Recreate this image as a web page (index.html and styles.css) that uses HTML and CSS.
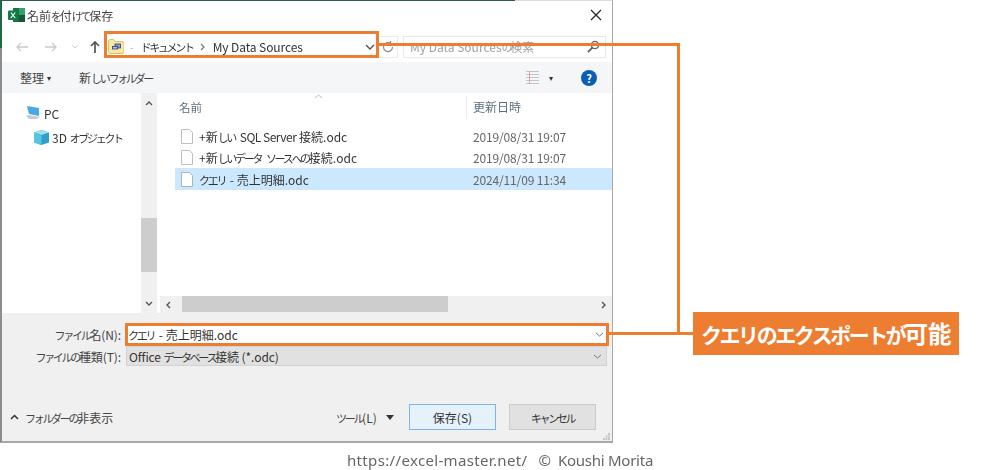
FILE: index.html
```html
<!DOCTYPE html>
<html lang="ja">
<head>
<meta charset="utf-8">
<title>名前を付けて保存</title>
<link rel="stylesheet" href="styles.css">
</head>
<body>
<div class="page">
  <div class="dialog">
    <header class="titlebar">
      <svg class="xl" width="17" height="16" viewBox="0 0 17 16"><rect x="5" y="1" width="12" height="14" fill="#1e7145"/><rect x="11" y="1" width="6" height="7" fill="#33a06a"/><rect x="11" y="8" width="6" height="7" fill="#14573a"/><rect x="0" y="3.5" width="10" height="9.5" rx="1" fill="#107c41"/><path d="M2.8 5.5l4.4 5.5M7.2 5.5l-4.4 5.5" stroke="#fff" stroke-width="1.2"/></svg>
      <span class="title">名前<span class="k">を</span>付<span class="k">けて</span>保存</span>
      <svg class="close" width="12" height="12" viewBox="0 0 12 12"><path d="M1 1l10 10M11 1L1 11" stroke="#222" stroke-width="1.2"/></svg>
    </header>
    <div class="addressrow">
      <svg class="nav-ic first" width="12" height="10" viewBox="0 0 12 10"><path d="M12 5H1M5 1L1 5l4 4" fill="none" stroke="#c8ccd0" stroke-width="1.4"/></svg>
      <svg class="nav-ic second" width="12" height="10" viewBox="0 0 12 10"><path d="M0 5h11M7 1l4 4-4 4" fill="none" stroke="#c8ccd0" stroke-width="1.4"/></svg>
      <svg class="nav-ic third" width="6" height="4" viewBox="0 0 6 4"><path d="M.5.5L3 3 5.5.5" fill="none" stroke="#c8ccd0"/></svg>
      <svg class="nav-ic fourth" width="10" height="12" viewBox="0 0 10 12"><path d="M5 12V1.5M1 5l4-4 4 4" fill="none" stroke="#555" stroke-width="1.7"/></svg>
      <div class="crumbs">
        <svg class="folder" width="16" height="15" viewBox="0 0 16 15"><path d="M.5 2.5q0-2 2-2h3l1.500 2h7q2 0 2 2v8q0 2-2 2h-11q-2.500 0-2.500-2z" fill="#f6e9a4" stroke="#d6c068"/><rect x="7" y="5" width="5.5" height="4" fill="#8d9bc8" stroke="#2b3a70" stroke-width=".8"/><rect x="4.5" y="7.5" width="5" height="2.5" fill="#b4bede" stroke="#2b3a70" stroke-width=".8"/></svg>
        <span class="crumb-dash">-</span>
        <span class="crumb k">ドキュメント</span>
        <svg class="crumb-sep" width="5" height="8" viewBox="0 0 5 8"><path d="M1 1l3 3-3 3" fill="none" stroke="#777" stroke-width="1.2"/></svg>
        <span class="crumb latin">My Data Sources</span>
        <svg class="crumb-down" width="10" height="6" viewBox="0 0 10 6"><path d="M1 1l4 4 4-4" fill="none" stroke="#555" stroke-width="1.4"/></svg>
      </div>
      <div class="refresh">
        <svg width="12" height="12" viewBox="0 0 12 12"><path d="M10.5 6a4.500 4.500 0 1 1-2-3.700M8.500 0v2.800H5.700" fill="none" stroke="#888" stroke-width="1.2"/></svg>
      </div>
      <div class="search">
        <span>My Data Sources<span class="k">の</span>検索</span>
        <svg width="13" height="13" viewBox="0 0 13 13"><circle cx="8" cy="5" r="3.6" fill="none" stroke="#666" stroke-width="1.4"/><path d="M5.5 7.5L1 12" stroke="#666" stroke-width="1.8"/></svg>
      </div>
    </div>
    <div class="toolbar">
      <span class="tool-a">整理</span><i class="mini">▾</i>
      <span class="tool-b">新<span class="k">しいフォルダー</span></span>
      <svg class="view" width="15" height="13" viewBox="0 0 15 13"><path d="M1 .5h13M1 3.5h13M1 6.5h13M1 9.5h13M1 12.5h13" stroke="#c2c5c8"/><path d="M4.5 0v13" stroke="#d8a8a0"/></svg><i class="mini view-mini">▾</i>
      <span class="help">?</span>
    </div>
    <div class="main">
      <nav class="tree">
        <div class="tree-row pc">
          <svg width="15" height="14" viewBox="0 0 15 14"><path d="M1 0l12 2v8L3 8z" fill="#4aa8e8"/><path d="M0 10l3-1 11 2-3 2H3z" fill="#c6ccd2"/></svg>
          <span>PC</span>
        </div>
        <div class="tree-row obj">
          <svg width="15" height="15" viewBox="0 0 15 15"><path d="M7.5 0L15 2.500v10L7.500 15 0 12.500v-10z" fill="#2ea0c8"/><path d="M7.5 0L15 2.500 7.500 5 0 2.500z" fill="#9fe0f0"/><path d="M7.5 5V15L0 12.500v-10z" fill="#58c4e0"/></svg>
          <span>3D <span class="k">オブジェクト</span></span>
        </div>
      </nav>
      <div class="vscroll">
        <svg class="arr" width="8" height="5" viewBox="0 0 8 5"><path d="M1 4l3-3 3 3" fill="none" stroke="#555" stroke-width="1.4"/></svg>
        <div class="vtrack"><div class="vthumb"></div></div>
        <svg class="arr" width="8" height="5" viewBox="0 0 8 5"><path d="M1 1l3 3 3-3" fill="none" stroke="#555" stroke-width="1.4"/></svg>
      </div>
      <section class="files">
        <div class="headers">
          <div class="h-name">名前<svg class="sort" width="9" height="5" viewBox="0 0 9 5"><path d="M1 4l3.5-3L8 4" fill="none" stroke="#bbb"/></svg></div>
          <div class="h-date">更新日時</div>
        </div>
        <div class="rows">
          <div class="row">
            <svg class="doc" width="12" height="15" viewBox="0 0 12 15"><path d="M.5.5h8l3 3v11H.5z" fill="#fff" stroke="#bdbdbd"/></svg>
            <span class="fname">+新<span class="k sp">しい</span> <span class="tight">SQL Server</span> 接続.odc</span><span class="fdate">2019/08/31 19:07</span>
          </div>
          <div class="row">
            <svg class="doc" width="12" height="15" viewBox="0 0 12 15"><path d="M.5.5h8l3 3v11H.5z" fill="#fff" stroke="#bdbdbd"/></svg>
            <span class="fname">+新<span class="k sp">しいデータ</span> <span class="k">ソースへの</span>接続.odc</span><span class="fdate">2019/08/31 19:07</span>
          </div>
          <div class="row selected">
            <svg class="doc" width="12" height="15" viewBox="0 0 12 15"><path d="M.5.5h8l3 3v11H.5z" fill="#fff" stroke="#a8b4bc"/></svg>
            <span class="fname"><span class="k sp">クエリ</span> - 売上明細.odc</span><span class="fdate">2024/11/09 11:34</span>
          </div>
        </div>
        <div class="hscroll">
          <svg class="harr" width="5" height="8" viewBox="0 0 5 8"><path d="M4 1L1 4l3 3" fill="none" stroke="#555" stroke-width="1.4"/></svg>
          <div class="htrack"><div class="hthumb"></div></div>
          <svg class="harr" width="5" height="8" viewBox="0 0 5 8"><path d="M1 1l3 3-3 3" fill="none" stroke="#555" stroke-width="1.4"/></svg>
        </div>
      </section>
    </div>
    <div class="bottom">
      <div class="field name-field">
        <label><span class="k">ファイル</span>名(N):</label>
        <div class="input"><span><span class="k sp">クエリ</span> - 売上明細.odc</span><svg width="9" height="5" viewBox="0 0 9 5"><path d="M1 1l3.5 3L8 1" fill="none" stroke="#777"/></svg></div>
      </div>
      <div class="field type-field">
        <label><span class="k">ファイルの</span>種類(T):</label>
        <div class="combo"><span class="combo-text">Office <span class="k">データベース</span>接続 (*.odc)</span><svg width="9" height="5" viewBox="0 0 9 5"><path d="M1 1l3.5 3L8 1" fill="none" stroke="#777"/></svg></div>
      </div>
      <div class="actions">
        <div class="hide">
          <svg width="9" height="6" viewBox="0 0 9 6"><path d="M1 5l3.5-3.500L8 5" fill="none" stroke="#333" stroke-width="1.5"/></svg>
          <span><span class="k">フォルダーの</span>非表示</span>
        </div>
        <div class="tools"><span><span class="k">ツール</span>(L)</span><i></i></div>
        <button class="btn primary">保存(S)</button>
        <button class="btn"><span class="k">キャンセル</span></button>
      </div>
      <svg class="grip" width="7" height="7" viewBox="0 0 7 7"><path d="M5 0h2v2H5zM2.5 2.5h2v2h-2zM5 2.5h2v2H5zM0 5h2v2H0zM2.5 5h2v2h-2zM5 5h2v2H5z" fill="#c4c4c4"/></svg>
    </div>
  </div>
  <footer class="credit"><span class="url">https://excel-master.net/</span><span class="copy">©</span><span class="author">Koushi Morita</span></footer>

  <div class="mark mark-address"></div>
  <div class="mark mark-name"></div>
  <div class="line line-top"></div>
  <div class="line line-down"></div>
  <div class="line line-in"></div>
  <div class="callout"><span class="ck">クエリのエクスポートが</span>可能</div>
</div>
</body>
</html>
```
FILE: styles.css
```css
* { box-sizing: border-box; }
html, body { margin: 0; padding: 0; background: #fff; }
body { width: 1000px; height: 470px; overflow: hidden; font-family: "Noto Sans CJK JP", "Noto Sans", sans-serif; font-size: 12px; color: #333; white-space: nowrap; }
.page { position: relative; width: 1000px; height: 470px; filter: blur(.35px); }
.k { font-size: 11px; letter-spacing: -2.3px; }
.k.sp { margin-right: 2px; }
.tight { letter-spacing: -.5px; }

.dialog { position: relative; width: 613px; height: 443px; display: flex; flex-direction: column; background: #fff; border-right: 1px solid #a8a8a8; border-bottom: 2px solid #a8a8a8; border-left: 2px solid #8a8f8c; border-top: 1px solid #d8dcda; }
.dialog::before { content: ""; position: absolute; left: -2px; top: -1px; width: 515px; height: 1px; background: #2f5c45; }
.dialog::after { content: ""; position: absolute; left: -2px; top: -1px; width: 2px; height: 48px; background: #1f6a45; }

.titlebar { height: 30px; display: flex; align-items: center; padding: 0 10px 2px 6px; flex: none; }
.xl { margin-right: 2px; }
.title { font-size: 12px; color: #444; }
.close { margin-left: auto; }

.addressrow { height: 31px; display: flex; align-items: center; flex: none; position: relative; }
.nav-ic { flex: none; }
.nav-ic.first { margin-left: 14px; }
.nav-ic.second { margin-left: 17px; }
.nav-ic.third { margin-left: 15px; }
.nav-ic.fourth { margin-left: 12px; }
.crumbs { width: 272px; height: 22px; margin-left: 7px; display: flex; align-items: center; color: #333; }
.folder { margin-left: 1px; margin-right: 6px; flex: none; }
.crumb-dash { color: #aaa; margin-right: 7px; font-size: 10px; }
.crumb-sep { margin: 0 8px 0 7px; flex: none; }
.latin { letter-spacing: -.1px; }
.crumb-down { margin-left: auto; margin-right: 4px; flex: none; }
.refresh { width: 19px; height: 22px; display: flex; align-items: center; justify-content: center; border: 1px solid #e8eaec; border-left: 0; }
.search { width: 203px; height: 22px; margin-left: 5px; border: 1px solid #e6e8ea; display: flex; align-items: center; justify-content: space-between; padding: 0 5px 0 6px; color: #a0a0a0; }

.toolbar { height: 31px; flex: none; background: #f5f6f7; display: flex; align-items: center; position: relative; padding-right: 15px; }
.tool-a { margin-left: 18px; color: #444; }
.mini { font-style: normal; font-size: 8px; margin-left: 3px; color: #333; }
.tool-b { margin-left: 28px; color: #444; }
.view { margin-left: auto; }
.view-mini { margin-left: 9px; }
.help { margin-left: 28px; width: 16px; height: 16px; border-radius: 50%; background: #0a5fb4; color: #fff; font-weight: 700; font-size: 11px; line-height: 16px; text-align: center; }

.main { height: 220px; flex: none; display: flex; }
.tree { width: 139px; padding-top: 8px; flex: none; }
.tree-row { height: 24px; display: flex; align-items: center; }
.tree-row.pc { padding-left: 24px; gap: 3px; }
.tree-row.obj { padding-left: 32px; gap: 3px; }
.vscroll { width: 16px; flex: none; background: #f0f0f0; display: flex; flex-direction: column; align-items: center; padding: 8px 0 7px; }
.vtrack { flex: 1; width: 100%; padding-top: 112px; }
.vthumb { height: 54px; background: #cdcdcd; }
.files { flex: 1; min-width: 0; margin-left: 3px; display: flex; flex-direction: column; }
.headers { height: 26px; display: flex; color: #5f6f7d; flex: none; padding-top: 3px; }
.h-name { width: 307px; padding-left: 19px; position: relative; border-right: 1px solid #eaeef2; font-size: 11.5px; line-height: 22px; }
.sort { position: absolute; left: 154px; top: -2px; }
.h-date { padding-left: 6px; line-height: 22px; font-size: 12px; }
.rows { flex: 1; padding-top: 7px; padding-left: 15px; }
.row { height: 21px; display: flex; align-items: center; }
.doc { margin-left: 6px; flex: none; }
.fname { margin-left: 6px; width: 274px; flex: none; color: #333; }
.fdate { color: #666; letter-spacing: -.15px; }
.row.selected { background: #cce8ff; height: 22px; }
.hscroll { height: 17px; flex: none; background: #f0f0f0; display: flex; align-items: center; padding: 0 6px; }
.htrack { flex: 1; height: 100%; padding: 0 153px 0 11px; }
.hthumb { height: 16px; background: #cdcdcd; }

.bottom { flex: 1; background: #f0f0f0; position: relative; display: flex; flex-direction: column; padding-top: 11px; }
.field { display: flex; align-items: center; }
.field label { width: 119px; text-align: right; color: #444; letter-spacing: -.1px; }
.name-field { height: 21px; }
.input { width: 483px; height: 21px; margin-left: 4px; background: #fff; display: flex; align-items: center; justify-content: space-between; padding: 0 4px 0 3px; color: #333; }
.type-field { height: 20px; margin-top: 1px; }
.combo { width: 481px; height: 20px; margin-left: 5px; background: #e1e1e1; border: 1px solid #d2d2d2; display: flex; align-items: center; justify-content: space-between; padding: 0 4px 0 2px; color: #333; }
.combo-text { letter-spacing: -.1px; }
.actions { display: flex; align-items: center; margin-top: 38px; height: 26px; }
.hide { display: flex; align-items: center; gap: 6px; margin-left: 8px; width: 326px; color: #444; }
.tools { display: flex; align-items: center; gap: 9px; width: 73px; color: #444; }
.tools i { width: 0; height: 0; border-left: 4px solid transparent; border-right: 4px solid transparent; border-top: 5px solid #333; }
.btn { width: 87px; height: 26px; font: inherit; color: #333; background: #e1e1e1; border: 1px solid #cbcbcb; padding: 0; margin-right: 13px; }
.btn.primary { background: #e5f1fb; border-color: #7eb4ea; }
.grip { position: absolute; right: 2px; bottom: 1px; }

.credit { margin-top: 7px; padding-left: 347px; font-family: "Noto Sans", sans-serif; font-size: 15px; line-height: 20px; color: #666; }
.url { letter-spacing: .34px; }
.copy { margin-left: 11px; }
.author { margin-left: 7px; letter-spacing: -.25px; }

.mark { position: absolute; border: 3px solid #ed7d31; }
.mark-address { left: 104px; top: 31px; width: 275px; height: 27px; }
.mark-name { left: 125px; top: 323px; width: 484px; height: 23px; }
.line { position: absolute; background: #ed7d31; }
.line-top { left: 379px; top: 43px; width: 300px; height: 3px; }
.line-down { left: 677px; top: 43px; width: 3px; height: 291px; }
.line-in { left: 608px; top: 332px; width: 85px; height: 3px; }
.callout { position: absolute; left: 693px; top: 312px; width: 266px; height: 43px; padding-left: 8px; background: #ed7d31; color: #fff; font-weight: 700; font-size: 23.5px; line-height: 42px; white-space: nowrap; }
.ck { font-size: 21px; letter-spacing: -2.45px; }
```
